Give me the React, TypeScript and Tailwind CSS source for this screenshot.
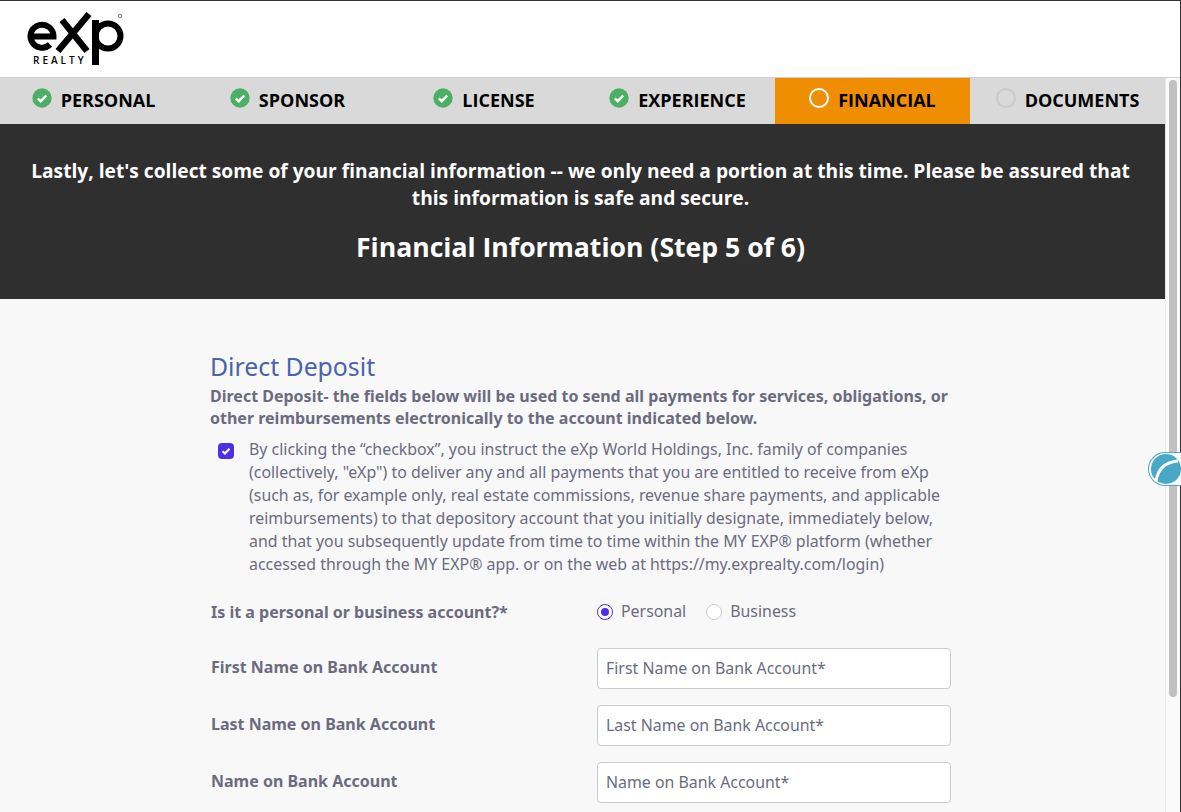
const tabs = [
  { label: 'PERSONAL', state: 'done' },
  { label: 'SPONSOR', state: 'done' },
  { label: 'LICENSE', state: 'done' },
  { label: 'EXPERIENCE', state: 'done' },
  { label: 'FINANCIAL', state: 'active' },
  { label: 'DOCUMENTS', state: 'todo' },
];

const fields = ['First Name on Bank Account', 'Last Name on Bank Account', 'Name on Bank Account'];

function Logo() {
  return (
    <div className="relative h-[58px] w-[100px]">
      <svg width="100" height="58" viewBox="0 0 100 58" className="absolute left-0 top-0" aria-label="eXp Realty logo">
        <path d="M3 27.5h23.5a11.5 11.5 0 1 0-3.5 8" fill="none" stroke="#000" strokeWidth="6" />
        <path d="M35 11l25 31M31 42L62 5" fill="none" stroke="#000" strokeWidth="6.5" />
        <rect x="65" y="11" width="7" height="45" fill="#000" />
        <circle cx="81" cy="27" r="12.5" fill="none" stroke="#000" strokeWidth="6" />
        <circle cx="93" cy="7" r="1.8" fill="none" stroke="#555" strokeWidth="0.7" />
      </svg>
      <span className="absolute left-[6px] top-[45px] text-[10px] font-semibold leading-[12px] tracking-[0.3em] text-black">
        REALTY
      </span>
    </div>
  );
}

function TabIcon({ state }: { state: string }) {
  if (state === 'done') {
    return (
      <svg width="20" height="20" viewBox="0 0 20 20" className="-mt-[6px]">
        <circle cx="10" cy="10" r="9.7" fill="#4caf66" />
        <path d="M5.8 10.4l2.9 2.8 5.6-5.7" fill="none" stroke="#fff" strokeWidth="2.4" />
      </svg>
    );
  }
  return (
    <span
      className={
        state === 'active'
          ? '-mt-[6px] h-5 w-5 rounded-full border-2 border-white'
          : '-mt-[6px] h-5 w-5 rounded-full border-2 border-[#c8c8c8]'
      }
    />
  );
}

export default function App() {
  return (
    <div className="flex h-screen flex-col overflow-hidden border-r border-t border-[#333] bg-white font-['Open_Sans',sans-serif]">
      <header className="h-[77px] shrink-0 border-b border-[#cfcfcf] pl-[27px] pt-[8px]">
        <Logo />
      </header>

      <div className="flex min-h-0 flex-1">
        <div className="min-w-0 flex-1">
          <nav className="grid h-[46px] grid-cols-[187px_201px_192px_195px_195px_195px] bg-[#d9d9d9]">
            {tabs.map((t) => (
              <div
                key={t.label}
                className={
                  t.state === 'active'
                    ? 'flex items-center justify-center gap-[9px] bg-[#ee8e00]'
                    : 'flex items-center justify-center gap-[9px]'
                }
              >
                <TabIcon state={t.state} />
                <span className="-mt-[2px] text-[18px] font-bold text-black">{t.label}</span>
              </div>
            ))}
          </nav>

          <section className="flex h-[175px] flex-col items-center bg-[#2f2f2f] pl-[18px] pr-[22px] pt-[33px] text-center text-white">
            <p className="text-[19.2px] font-bold leading-[27px]">
              Lastly, let's collect some of your financial information -- we only need a portion at this time. Please be
              assured that this information is safe and secure.
            </p>
            <h1 className="mt-[20px] text-[26.6px] font-bold leading-[33px]">Financial Information (Step 5 of 6)</h1>
          </section>

          <main className="h-full bg-[#f8f8f8] pl-[210px] pt-[49px] font-['Noto_Sans',sans-serif] text-[#6b6b80]">
            <h2 className="text-[24.8px] leading-[36px] text-[#4a63b0]">Direct Deposit</h2>
            <p className="mt-[1px] w-[760px] text-[16px] font-bold leading-[22px]">
              Direct Deposit- the fields below will be used to send all payments for services, obligations, or other
              reimbursements electronically to the account indicated below.
            </p>

            <div className="mt-[9px] flex w-[740px]">
              <span className="ml-[8px] mt-[5px] flex h-[16px] w-[16px] shrink-0 items-center justify-center rounded-[4px] bg-[#4f2ee8]">
                <svg width="10" height="10" viewBox="0 0 10 10">
                  <path d="M1.5 5.2l2.4 2.3 4.6-4.7" fill="none" stroke="#fff" strokeWidth="2" />
                </svg>
              </span>
              <p className="ml-[15px] text-[15.9px] leading-[23px]">
                By clicking the “checkbox”, you instruct the eXp World Holdings, Inc. family of companies (collectively,
                "eXp") to deliver any and all payments that you are entitled to receive from eXp (such as, for example
                only, real estate commissions, revenue share payments, and applicable reimbursements) to that depository
                account that you initially designate, immediately below, and that you subsequently update from time to
                time within the MY EXP® platform (whether accessed through the MY EXP® app. or on the web at
                https://my.exprealty.com/login)
              </p>
            </div>

            <div className="mt-[24px] flex h-[24px] items-center">
              <span className="w-[387px] pl-[1px] text-[16px] font-bold">Is it a personal or business account?*</span>
              <span className="flex h-[16px] w-[16px] items-center justify-center rounded-full border border-[#4f2ee8] bg-white">
                <span className="h-[8px] w-[8px] rounded-full bg-[#4f2ee8]" />
              </span>
              <span className="ml-[8px] text-[15.9px]">Personal</span>
              <span className="ml-[20px] h-[16px] w-[16px] rounded-full border border-[#ccc] bg-white" />
              <span className="ml-[8px] text-[15.9px]">Business</span>
            </div>

            <div className="mt-[24px] flex flex-col gap-[16px]">
              {fields.map((f) => (
                <div key={f} className="flex h-[41px] items-center">
                  <span className="w-[387px] pb-[3px] pl-[1px] text-[16px] font-bold">{f}</span>
                  <div className="flex h-[41px] w-[354px] items-center rounded-[4px] border border-[#ccc] bg-white px-[8px] text-[15.9px]">
                    {f}*
                  </div>
                </div>
              ))}
            </div>
          </main>
        </div>

        <div className="relative w-[15px] shrink-0 border-l border-[#e5e5e5] bg-[#fafafa] pl-[3px] pt-[2px]">
          <div className="h-[617px] w-[8px] rounded-full bg-[#c1c1c1]" />
        </div>
      </div>

      <div className="absolute left-[1148px] top-[452px] flex h-[34px] w-[33px] items-center overflow-hidden rounded-l-full border border-r-0 border-[#4aa8c7] bg-white pl-[2px]">
        <svg width="30" height="30" viewBox="0 0 30 30" className="shrink-0">
          <circle cx="15" cy="15" r="15" fill="#4aa8c7" />
          <path d="M5 27C7 15 14 8 27 7" fill="none" stroke="#fff" strokeWidth="3" />
        </svg>
      </div>
    </div>
  );
}
